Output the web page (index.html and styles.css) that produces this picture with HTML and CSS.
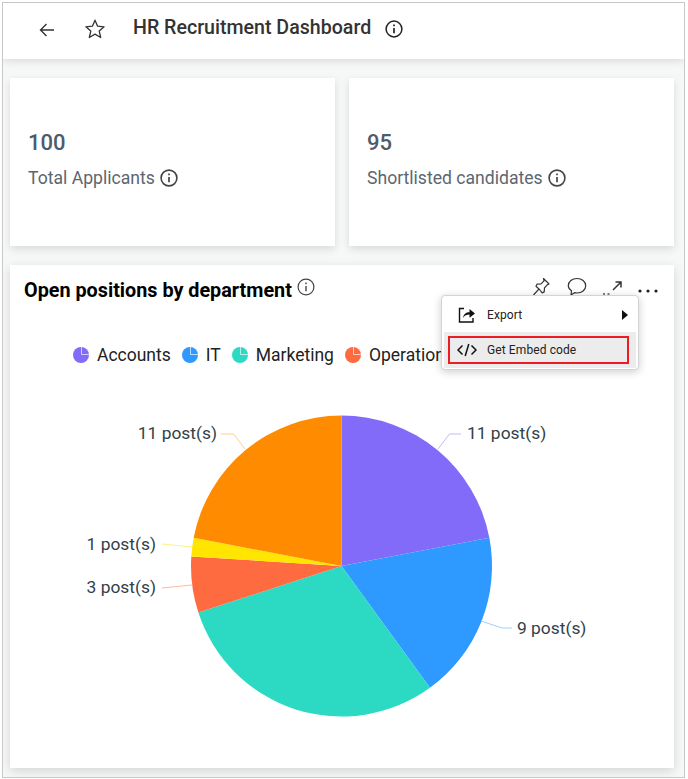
FILE: index.html
```html
<!DOCTYPE html>
<html lang="en">
<head>
<meta charset="UTF-8">
<meta name="viewport" content="width=device-width, initial-scale=1.0">
<title>HR Recruitment Dashboard</title>
<link rel="stylesheet" href="styles.css">
</head>
<body>
<div class="frame">
    <header class="topbar">
        <svg class="back-icon" width="18" height="18" viewBox="0 0 18 18"><path d="M16 9H2.500M8.500 3 2.500 9l6 6" fill="none" stroke="#333" stroke-width="1.400"/></svg>
        <svg class="star-icon" width="22" height="22" viewBox="0 0 22 22"><path d="M11 2.200l2.600 6 6.500.6-4.900 4.300 1.500 6.400L11 16.100 5.300 19.500l1.500-6.400L1.900 8.800l6.500-.6z" fill="none" stroke="#333" stroke-width="1.300" stroke-linejoin="round"/></svg>
        <h1 class="page-title">HR Recruitment Dashboard</h1>
        <svg class="info-icon" width="18" height="18" viewBox="0 0 18 18"><circle cx="9" cy="9" r="7.900" fill="none" stroke="#222" stroke-width="1.500"/><path d="M9 8v5.200M9 4.600v1.700" stroke="#222" stroke-width="1.700"/></svg>
    </header>

    <main class="content">
        <section class="stat-row">
            <div class="stat-card">
                <div class="stat-value">100</div>
                <div class="stat-label">Total Applicants
                    <svg width="18" height="18" viewBox="0 0 18 18"><circle cx="9" cy="9" r="7.900" fill="none" stroke="#444" stroke-width="1.600"/><path d="M9 8v5.200M9 4.600v1.700" stroke="#444" stroke-width="1.700"/></svg>
                </div>
            </div>
            <div class="stat-card">
                <div class="stat-value">95</div>
                <div class="stat-label">Shortlisted candidates
                    <svg width="18" height="18" viewBox="0 0 18 18"><circle cx="9" cy="9" r="7.900" fill="none" stroke="#444" stroke-width="1.600"/><path d="M9 8v5.200M9 4.600v1.700" stroke="#444" stroke-width="1.700"/></svg>
                </div>
            </div>
        </section>

        <section class="chart-panel">
            <div class="chart-head">
                <h2 class="chart-title">Open positions by department</h2>
                <svg class="chart-info" width="18" height="18" viewBox="0 0 18 18"><circle cx="9" cy="9" r="7.900" fill="none" stroke="#444" stroke-width="1.200"/><path d="M9 8v5.200M9 4.600v1.700" stroke="#444" stroke-width="1.400"/></svg>
                <div class="chart-tools">
                    <svg width="20" height="20" viewBox="0 0 20 20"><path d="M12.500 1.500l5.500 5.500-1.500.6-3 3.300-.3 4-2 1-2.700-3.400-3.500-3.300 1-2 4-.3 3-3.100zM8.300 11.700 2.500 18" fill="none" stroke="#333" stroke-width="1.200" stroke-linejoin="round"/></svg>
                    <svg width="20" height="20" viewBox="0 0 20 20"><path d="M10 1.500c4.800 0 8.700 3 8.700 7.300s-3.900 7.200-8.700 7.200c-.9 0-1.700-.1-2.500-.3L4 18l.5-4.300C2.500 12.400 1.300 10.800 1.300 8.800 1.300 4.500 5.200 1.500 10 1.500z" fill="none" stroke="#333" stroke-width="1.200" stroke-linejoin="round"/></svg>
                    <svg width="20" height="20" viewBox="0 0 20 20"><path d="M12.500 5H18v5.500M18 5l-8 8" fill="none" stroke="#333" stroke-width="1.500"/><path d="M0 17h2M4.500 17h2" stroke="#555" stroke-width="1.300"/></svg>
                    <svg class="tool-dots" width="20" height="20" viewBox="0 0 20 20"><circle cx="2" cy="10" r="1.600" fill="#222"/><circle cx="10" cy="10" r="1.600" fill="#222"/><circle cx="18" cy="10" r="1.600" fill="#222"/></svg>
                </div>
            </div>

            <div class="legend">
                <span class="legend-item"><svg class="marker" width="16" height="16" viewBox="0 0 16 16"><circle cx="8" cy="8" r="8" fill="#826bf8"/><path d="M8.500 0v7.500H16" fill="none" stroke="#fff" stroke-opacity=".65"/></svg>Accounts</span>
                <span class="legend-item"><svg class="marker" width="16" height="16" viewBox="0 0 16 16"><circle cx="8" cy="8" r="8" fill="#2e99ff"/><path d="M8.500 0v7.500H16" fill="none" stroke="#fff" stroke-opacity=".65"/></svg>IT</span>
                <span class="legend-item"><svg class="marker" width="16" height="16" viewBox="0 0 16 16"><circle cx="8" cy="8" r="8" fill="#2cdac3"/><path d="M8.500 0v7.500H16" fill="none" stroke="#fff" stroke-opacity=".65"/></svg>Marketing</span>
                <span class="legend-item"><svg class="marker" width="16" height="16" viewBox="0 0 16 16"><circle cx="8" cy="8" r="8" fill="#ff6b40"/><path d="M8.500 0v7.500H16" fill="none" stroke="#fff" stroke-opacity=".65"/></svg>Operations</span>
            </div>

            <svg class="pie" width="664" height="390" viewBox="10 385 664 390">
                <path d="M341.500 566V415.500A150.500 150.500 0 0 1 489.340 537.800Z" fill="#826bf8"/>
                <path d="M341.500 566 489.340 537.800A150.500 150.500 0 0 1 429.960 687.750Z" fill="#2e99ff"/>
                <path d="M341.500 566 429.960 687.750A150.500 150.500 0 0 1 198.360 612.500Z" fill="#2cdac3"/>
                <path d="M341.500 566 198.360 612.500A150.500 150.500 0 0 1 191.300 556.550Z" fill="#ff6b40"/>
                <path d="M341.500 566 191.300 556.550A150.500 150.500 0 0 1 193.670 537.800Z" fill="#ffe500"/>
                <path d="M341.500 566 193.670 537.800A150.500 150.500 0 0 1 341.500 415.500Z" fill="#ff8c00"/>

                <path class="leader" d="M438 449l11.500-15h11.500" stroke="#c4b9fc"/>
                <path class="leader" d="M481 621l21 7h10" stroke="#9fd0ff"/>
                <path class="leader" d="M245 449l-11.500-15H221" stroke="#ffcb94"/>
                <path class="leader" d="M192 547l-30-3" stroke="#fff08a"/>
                <path class="leader" d="M192 585l-30 3" stroke="#ffb8a2"/>

                <text class="pie-label" x="467" y="439">11 post(s)</text>
                <text class="pie-label" x="517" y="634">9 post(s)</text>
                <text class="pie-label" x="217" y="439" text-anchor="end">11 post(s)</text>
                <text class="pie-label" x="156" y="550" text-anchor="end">1 post(s)</text>
                <text class="pie-label" x="156" y="593" text-anchor="end">3 post(s)</text>
            </svg>

            <div class="chart-menu">
                <div class="menu-row">
                    <svg width="18" height="18" viewBox="0 0 18 18"><path d="M6 2.500H1.500V16h13.500v-4" fill="none" stroke="#111" stroke-width="1.400"/><path d="M5 12c.5-4 3-5.800 6.500-5.800V3L17 7.500l-5.500 4.200V8.600c-2.800 0-5 1-6.500 3.400z" fill="#111"/></svg>
                    <span>Export</span>
                    <i class="menu-caret"></i>
                </div>
                <div class="menu-row is-active">
                    <svg width="20" height="14" viewBox="0 0 20 14"><path d="M5.500 2.500 1 7l4.500 4.500M14.500 2.500 19 7l-4.500 4.500M11.800 1 8.200 13" fill="none" stroke="#111" stroke-width="1.500"/></svg>
                    <span>Get Embed code</span>
                </div>
            </div>
        </section>
    </main>
</div>
</body>
</html>
```

FILE: styles.css
```css
html, body {
    margin: 0;
    padding: 0;
    background-color: #fff;
}
body {
    font-family: Roboto, "Liberation Sans", sans-serif;
    color: #333;
}
.frame {
    width: 681px;
    height: 774px;
    margin: 2px 0 0 2px;
    border: 1px solid #c8c8c8;
    background-color: #f6f7f7;
    overflow: hidden;
}
.topbar {
    display: flex;
    align-items: center;
    height: 56px;
    padding: 0 0 4px 35px;
    box-sizing: border-box;
    background-color: #fff;
    box-shadow: 0 2px 8px rgba(0, 0, 0, 0.12);
}
.back-icon {
    margin: 2px 28px 0 0;
}
.star-icon {
    margin-right: 27px;
}
.page-title {
    margin: 0 14px 2px 0;
    font-size: 19.600px;
    font-weight: 500;
    color: #333;
    line-height: 22px;
}
.content {
    padding: 19px 10px 0 7px;
}
.stat-row {
    display: flex;
    gap: 14px;
}
.stat-card {
    flex: 1;
    height: 168px;
    box-sizing: border-box;
    padding: 52px 18px 0;
    background-color: #fff;
    box-shadow: 0 3px 8px rgba(0, 0, 0, 0.12);
}
.stat-value {
    font-size: 22px;
    font-weight: 500;
    line-height: 26px;
    color: #4d5b6b;
}
.stat-label {
    display: flex;
    align-items: center;
    gap: 5px;
    margin-top: 10px;
    font-size: 17.600px;
    line-height: 24px;
    color: #5c6670;
}
.chart-panel {
    position: relative;
    height: 503px;
    margin-top: 19px;
    background-color: #fff;
    box-shadow: 0 3px 10px rgba(0, 0, 0, 0.14);
}
.chart-head {
    display: flex;
    align-items: flex-start;
    padding: 12px 16px 0 14px;
}
.chart-title {
    margin: 1px 5px 0 0;
    font-size: 19.800px;
    font-weight: 700;
    line-height: 26px;
    color: #000;
}
.chart-info {
    margin-top: 1px;
}
.chart-tools {
    display: flex;
    gap: 16px;
    margin-left: auto;
}
.tool-dots {
    margin: 4px 0 0 -1px;
}
.legend {
    display: flex;
    gap: 11px;
    margin-top: 39px;
    padding-left: 63px;
    font-size: 17.500px;
    line-height: 24px;
    color: #222;
    white-space: nowrap;
}
.legend-item {
    display: flex;
    align-items: center;
    gap: 8px;
}
.pie {
    display: block;
    margin-top: 18px;
}
.leader {
    fill: none;
    stroke-width: 1;
}
.pie-label {
    font-size: 17.400px;
    fill: #333f4a;
}
.chart-menu {
    position: absolute;
    left: 431px;
    top: 30px;
    width: 198px;
    height: 75px;
    box-sizing: border-box;
    padding: 2px;
    background-color: #fff;
    border: 1px solid #d4d4d4;
    border-radius: 4px;
    box-shadow: 0 2px 8px rgba(0, 0, 0, 0.2);
}
.menu-row {
    position: relative;
    display: flex;
    align-items: center;
    height: 34px;
    padding-left: 14px;
    font-size: 12px;
    letter-spacing: 0.1px;
    color: #222;
}
.menu-row span {
    margin-left: 11px;
}
.menu-row.is-active {
    height: 36px;
    background-color: #ececec;
    padding-left: 13px;
}
.menu-row.is-active span {
    margin-left: 10px;
}
.menu-row.is-active::after {
    content: "";
    position: absolute;
    left: 4px;
    top: 4px;
    width: 181px;
    height: 28px;
    box-sizing: border-box;
    border: 2px solid #ed1c24;
}
.menu-caret {
    position: absolute;
    right: 8px;
    top: 12px;
    border-left: 6px solid #111;
    border-top: 5px solid transparent;
    border-bottom: 5px solid transparent;
}
```
